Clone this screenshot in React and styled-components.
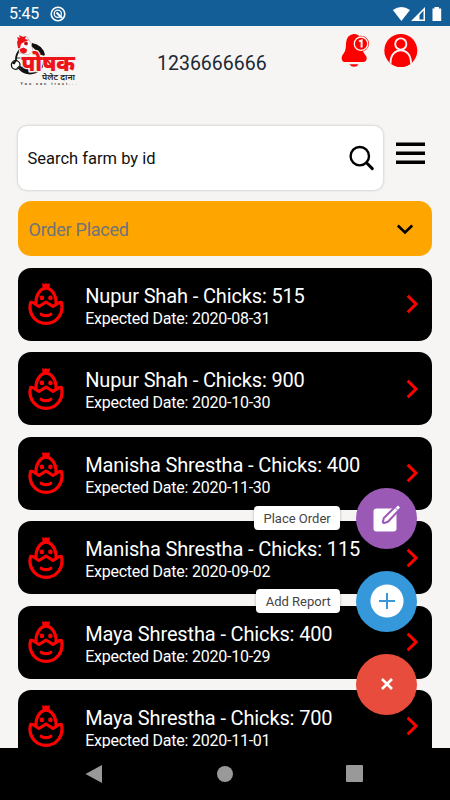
import React from "react";
import styled, {createGlobalStyle} from "styled-components";

const GlobalStyle = createGlobalStyle`
  * {
    box-sizing: border-box;
  }
  body {
    margin: 0;
    overflow: hidden;
    font-family: Roboto, "Noto Sans", sans-serif;
  }
`

const Screen = styled.div`
  position: relative;
  display: flex;
  flex-direction: column;
  width: 450px;
  height: 800px;
  overflow: hidden;
  background: #f6f5f3;
`

const StatusBar = styled.div`
  display: flex;
  flex: none;
  align-items: center;
  height: 26px;
  padding: 1px 8px 0 9px;
  background: #145e98;
  color: white;
  font-size: 16px;
  letter-spacing: -.2px;

  svg:first-of-type {
    margin-left: 11px;
  }
  svg:last-of-type {
    margin-left: auto;
  }
`

const Header = styled.header`
  display: flex;
  flex: none;
  height: 99.5px;
  padding: 5px 0 0 10px;
`

const HeaderIcons = styled.div`
  display: flex;
  gap: 15px;
  margin: 2px 0 0 4px;
`

const Phone = styled.div`
  width: 180px;
  margin: 21px 0 0 77px;
  color: #1c2833;
  font-size: 19.5px;
  line-height: 23px;
`

const Search = styled.div`
  display: flex;
  flex: none;
  height: 64.5px;
  padding-left: 17.5px;

  > svg {
    margin: 16px 0 0 13px;
  }
`

const SearchBox = styled.div`
  display: flex;
  align-items: center;
  justify-content: space-between;
  width: 365.5px;
  padding: 1px 8px 0 10px;
  border-radius: 9px;
  background: white;
  box-shadow: 0 0 3px rgba(0, 0, 0, .25);
  color: #111;
  font-size: 16.5px;
`

const Select = styled.div`
  display: flex;
  flex: none;
  align-items: center;
  justify-content: space-between;
  height: 55px;
  margin: 11.4px 18px 0 17.5px;
  padding: 2px 18px 0 11px;
  border-radius: 13px;
  background: #ffa500;
  color: #6d747c;
  font-size: 18px;
  letter-spacing: -.25px;
`

const List = styled.div`
  display: flex;
  flex: 1;
  flex-direction: column;
  gap: 11.4px;
  min-height: 0;
  padding: 11.6px 18px 0 17.5px;
  overflow: hidden;
`

const Card = styled.div`
  display: flex;
  flex: none;
  align-items: center;
  height: 73px;
  padding: 0 13px 0 10px;
  border-radius: 13px;
  background: black;
  color: white;

  > svg:last-child {
    margin-left: auto;
  }
`

const CardText = styled.div`
  padding-top: 4px;
  margin-left: 21.7px;
  white-space: nowrap;
`

const CardTitle = styled.div`
  font-size: 20px;
  letter-spacing: -.14px;
  line-height: 24px;
`

const CardDate = styled.div`
  padding-top: 1px;
  font-size: 16px;
  letter-spacing: -.24px;
  line-height: 20px;
`

const NavBar = styled.div`
  display: flex;
  flex: none;
  align-items: center;
  justify-content: space-between;
  height: 52.5px;
  padding: 0 87px 0 85px;
  background: black;
`

const Actions = styled.div`
  position: absolute;
  top: 487.5px;
  right: 33px;
  display: flex;
  flex-direction: column;
  gap: 22px;
`

const Action = styled.div`
  display: flex;
  align-items: center;
  justify-content: flex-end;
  gap: 16px;
`

const ActionLabel = styled.span`
  height: 24px;
  padding: 0 9.3px;
  border-radius: 4px;
  background: white;
  box-shadow: 0 1px 3px rgba(0, 0, 0, .3);
  color: #444;
  font-size: 13px;
  line-height: 25px;
  white-space: nowrap;
`

const RoundButton = styled.button`
  display: flex;
  align-items: center;
  justify-content: center;
  width: 61px;
  height: 61px;
  padding: 0;
  border: none;
  border-radius: 50%;
  background: ${props => props.$color};
`

const orders = [
    {name: 'Nupur Shah', chicks: 515, date: '2020-08-31'},
    {name: 'Nupur Shah', chicks: 900, date: '2020-10-30'},
    {name: 'Manisha Shrestha', chicks: 400, date: '2020-11-30'},
    {name: 'Manisha Shrestha', chicks: 115, date: '2020-09-02'},
    {name: 'Maya Shrestha', chicks: 400, date: '2020-10-29'},
    {name: 'Maya Shrestha', chicks: 700, date: '2020-11-01'},
]

const Logo = () => (
    <svg width="70" height="58" viewBox="10 31 70 58">
        <circle cx="30" cy="59.500" r="14" fill="white" stroke="#111" strokeWidth="1.800"/>
        <path d="M32 43q11 2 13 12h-8q-1-6-5-8zM19 66q3 7 10 8l-1-6z" fill="#111"/>
        <path d="M19 53V40l2-3 6 0 4 6 2 8-5 4z" fill="white" stroke="#888" strokeWidth=".5"/>
        <path d="M18 48l-1-6 1-2-1-3 3 1-1-3 4 2 3-1-1 3 4 1-5 2-3 2-1 4z" fill="#ec1218"/>
        <path d="M19.500 49l4-1.500 3.500 2-.5 3-3 1.200-3-1.500z" fill="#ec1218"/>
        <circle cx="26" cy="43.500" r="2" fill="#ec1218"/>
        <circle cx="26" cy="43.500" r=".7" fill="#222"/>
        <path d="M14 61l3-3 4 0" fill="none" stroke="#222" strokeWidth="1"/>
        <circle cx="15.700" cy="65" r="4.300" fill="white" stroke="#111" strokeWidth="1.300"/>
        <path d="M12 63.500q1-3 4.500-2.500l-2 3.500zM16 68.500l3-3-.5 3z" fill="#111"/>
        <text x="21.500" y="70.500" textLength="53.500" lengthAdjust="spacingAndGlyphs" fontSize="22.500" fontWeight="900" fill="#ed1419" stroke="#f4f0ee" strokeWidth="2.500" paintOrder="stroke">पोषक</text>
        <text x="42" y="80" textLength="33" lengthAdjust="spacingAndGlyphs" fontSize="8.500" fontWeight="600" fill="#222">पेलेट दाना</text>
        <text x="20.500" y="85.300" textLength="56" fontSize="3.800" fontWeight="500" fill="#222">You can trust...</text>
    </svg>
)

const Bell = () => (
    <svg width="28" height="34" viewBox="341 33 28 34">
        <path d="M353.500 34q-7 1-7.500 9c0 7-1 9-3.500 12-1.500 2-1 7 2 7h19c3 0 4-4 2.500-6-3-4-4-6-4-12 0-7-4-10.500-8.500-10z" fill="red"/>
        <path d="M349.500 64.200h9q-1.500 2.600-4.500 2.600t-4.500-2.600z" fill="red"/>
        <circle cx="361" cy="43.700" r="7.900" fill="red"/>
        <circle cx="361" cy="43.700" r="6.700" fill="none" stroke="#f6f5f3" strokeWidth="1.300"/>
        <path d="M359 41.400l2.600-1v7.200" fill="none" stroke="#f6f5f3" strokeWidth="2"/>
    </svg>
)

const Profile = () => (
    <svg width="34" height="34" viewBox="384 33 34 34">
        <clipPath id="round"><circle cx="400.800" cy="50.500" r="16.500"/></clipPath>
        <circle cx="400.800" cy="50.500" r="16.500" fill="red"/>
        <g clipPath="url(#round)" fill="red" stroke="#f6f5f3" strokeWidth="1.900">
            <path d="M390.500 69v-6c0-17 20.500-17 20.500 0v6"/>
            <circle cx="400.800" cy="44" r="5.600"/>
        </g>
    </svg>
)

const Chick = () => (
    <svg width="36" height="44" viewBox="0 0 36 44" fill="none" stroke="red" strokeWidth="3.200" strokeLinecap="round" strokeLinejoin="round">
        <path d="M14 1.200l2.800.8L18 1l1.200 1 2.800-.8-.5 4h-7z" fill="red" stroke="none"/>
        <path d="M8 21.500C7.500 12.500 13 6.200 18 6.200s10.500 6.300 10 15.300"/>
        <path d="M2.700 20.300l2 .2 6.300 4L18 20l7 4.500 6.300-4 2-.2C36.500 32 28 41.300 18 41.300S-.5 32 2.700 20.300z"/>
        <path d="M13.200 32.300q4.800 2.800 9.600 0"/>
        <g fill="red" stroke="none">
            <circle cx="13.900" cy="15.900" r="2.300"/>
            <circle cx="22.400" cy="15.900" r="2.300"/>
        </g>
    </svg>
)

export default function App() {
    return <Screen>
        <GlobalStyle/>
        <StatusBar>
            5:45
            <svg width="16" height="16" viewBox="0 0 16 16" fill="none" stroke="white">
                <circle cx="8" cy="8" r="6.800" strokeWidth="1.600"/>
                <circle cx="7.800" cy="7.800" r="3.600" strokeWidth="1.200"/>
                <path d="M6.500 6.500l5.500 5.500" strokeWidth="2"/>
            </svg>
            <svg width="50" height="16" viewBox="392 5 50 16" fill="white">
                <path d="M392.800 9q8.700-6 17.200 0l-8.600 11z"/>
                <path fillRule="evenodd" d="M411 20l14-14v14zM419.500 14v4.500h4v-9z"/>
                <path d="M432.500 7.500h2V6h4.500v1.500h2.200v12.500h-8.700z"/>
            </svg>
        </StatusBar>
        <Header>
            <Logo/>
            <Phone>1236666666</Phone>
            <HeaderIcons>
                <Bell/>
                <Profile/>
            </HeaderIcons>
        </Header>
        <Search>
            <SearchBox>
                Search farm by id
                <svg width="27" height="27" viewBox="0 0 27 27" fill="none" stroke="black" strokeWidth="2.400">
                    <circle cx="11.800" cy="11.200" r="9.200"/>
                    <path d="M18.500 17.800l5.800 5.800" strokeWidth="3" strokeLinecap="round"/>
                </svg>
            </SearchBox>
            <svg width="29" height="23" viewBox="0 0 29 23" stroke="black" strokeWidth="3.500">
                <path d="M0 2.300h29M0 11.200h29M0 20.200h29"/>
            </svg>
        </Search>
        <Select>
            Order Placed
            <svg width="18" height="14" viewBox="0 0 18 14" fill="none" stroke="black" strokeWidth="2.600">
                <path d="M1.800 2.500L9 9.500l7.200-7"/>
            </svg>
        </Select>
        <List>
            {
                orders.map((order, index) =>
                    <Card key={`order-${index}`}>
                        <Chick/>
                        <CardText>
                            <CardTitle>{order.name} - Chicks: {order.chicks}</CardTitle>
                            <CardDate>Expected Date: {order.date}</CardDate>
                        </CardText>
                        <svg width="13" height="20" viewBox="0 0 13 20" fill="none" stroke="red" strokeWidth="3">
                            <path d="M1.700 1.700L10 10l-8.300 8.300"/>
                        </svg>
                    </Card>
                )
            }
        </List>
        <NavBar>
            <svg width="18" height="18" fill="#999"><path d="M.5 9L17 0v18z"/></svg>
            <svg width="16" height="16" fill="#999"><circle cx="8" cy="8" r="8"/></svg>
            <svg width="17" height="17" fill="#999"><rect width="17" height="17" rx="1"/></svg>
        </NavBar>
        <Actions>
            <Action>
                <ActionLabel>Place Order</ActionLabel>
                <RoundButton $color="#9b59b6">
                    <svg width="28" height="28" viewBox="0 0 28 28">
                        <rect x=".5" y="4.500" width="23" height="23" rx="3" fill="white"/>
                        <path d="M10.800 18l1-3.500L25 1.500l2 2L14.500 16.800z" fill="#9b59b6" stroke="#9b59b6" strokeWidth="4" strokeLinejoin="round"/>
                        <path d="M10.800 18l1-3.500L25 1.500l2 2L14.500 16.800z" fill="white"/>
                        <path d="M22 3.500l3 3" stroke="#9b59b6" strokeWidth=".8"/>
                    </svg>
                </RoundButton>
            </Action>
            <Action>
                <ActionLabel>Add Report</ActionLabel>
                <RoundButton $color="#3498db">
                    <svg width="34" height="34" viewBox="0 0 34 34">
                        <circle cx="17" cy="17" r="16.600" fill="white"/>
                        <path d="M9 17h16M17 9v16" stroke="#3498db" strokeWidth="2"/>
                    </svg>
                </RoundButton>
            </Action>
            <Action>
                <RoundButton $color="#e74c3c">
                    <svg width="12" height="12" stroke="white" strokeWidth="2.600"><path d="M1 1l10 10M11 1L1 11"/></svg>
                </RoundButton>
            </Action>
        </Actions>
    </Screen>
}
